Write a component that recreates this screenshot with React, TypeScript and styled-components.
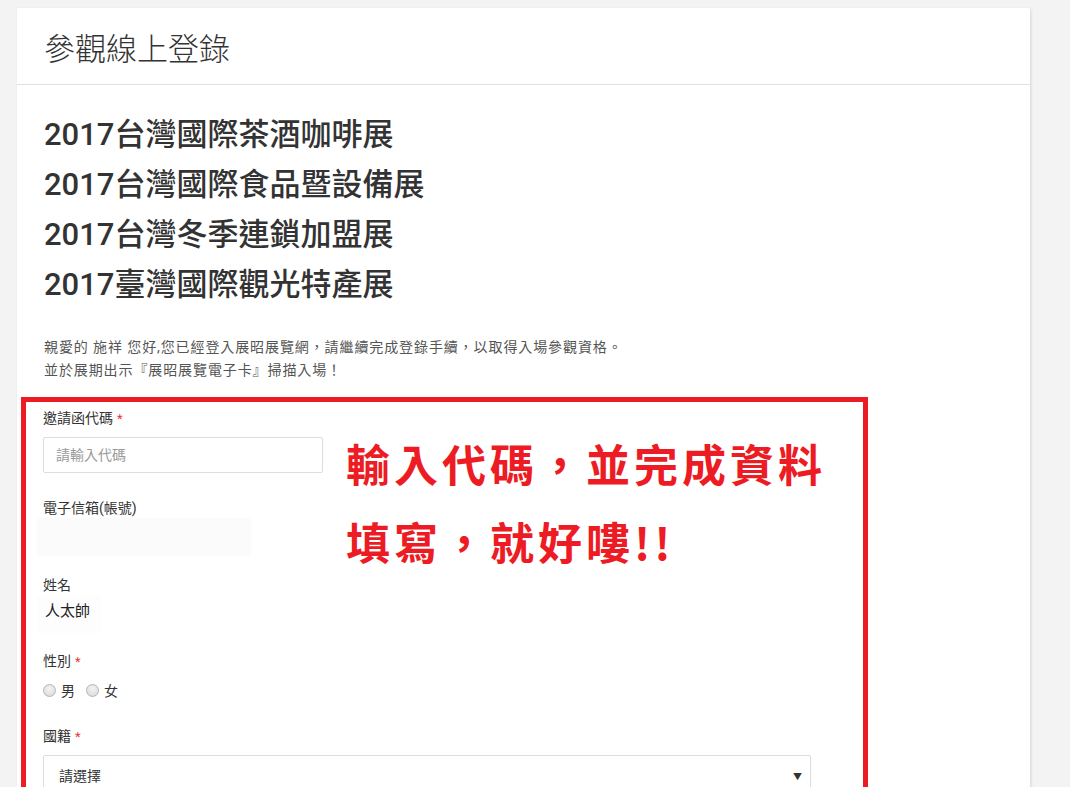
import styled, { createGlobalStyle } from 'styled-components';

const GlobalStyle = createGlobalStyle`
  html, body {
    margin: 0;
    padding: 0;
    background: #f3f3f3;
  }
  body {
    font-family: Roboto, "Noto Sans CJK TC", "Noto Sans", sans-serif;
    color: #333;
    overflow: hidden;
  }
`;

const Page = styled.div`
  padding: 8px 40px 0 17px;
  height: 787px;
  box-sizing: border-box;
`;

const Card = styled.div`
  width: 1013px;
  background: #fff;
  border-radius: 2px;
  box-shadow: 1px 1px 3px rgba(0, 0, 0, 0.12);
  min-height: 900px;
`;

const CardHeader = styled.div`
  height: 76px;
  border-bottom: 1px solid #e0e0e0;
  display: flex;
  align-items: center;
  padding: 0 27px;
`;

const PageTitle = styled.h1`
  margin: 0;
  font-size: 31px;
  font-weight: 300;
  color: #333;
`;

const CardBody = styled.div`
  padding: 25px 27px 0;
`;

const ExpoList = styled.div`
  display: flex;
  flex-direction: column;
`;

const ExpoTitle = styled.h2`
  margin: 0;
  font-size: 31px;
  line-height: 50px;
  font-weight: 500;
  color: #333;
`;

const Intro = styled.p`
  margin: 26px 0 15px;
  font-size: 14px;
  line-height: 23px;
  color: #555;
  letter-spacing: 0.9px;
`;

const Highlight = styled.div`
  position: relative;
  margin-left: -23px;
  width: 847px;
  box-sizing: border-box;
  border: 5px solid #ed1c24;
  border-bottom: none;
  padding: 6px 52px 0 17px;
`;

const Note = styled.div`
  position: absolute;
  left: 320px;
  top: 22px;
  font-family: "Noto Sans CJK TC", sans-serif;
  font-size: 44px;
  font-weight: 700;
  line-height: 78px;
  color: #ed1c24;
  letter-spacing: 4px;
`;

const Group = styled.div<{ $gap?: number }>`
  margin-bottom: ${(p) => p.$gap ?? 25}px;
`;

const Label = styled.div`
  font-size: 14px;
  line-height: 20px;
  color: #333;
  margin-bottom: 8px;
`;

const Req = styled.span`
  color: #e53935;
  margin-left: 4px;
  font-size: 13px;
`;

const TextInput = styled.input`
  display: block;
  width: 280px;
  height: 36px;
  box-sizing: border-box;
  border: 1px solid #ddd;
  border-radius: 2px;
  padding: 0 12px;
  font-family: inherit;
  font-size: 14px;
  color: #333;
  outline: none;
  &::placeholder {
    color: #9a9a9a;
  }
`;

const Static = styled.div<{ $width: number; $faint?: boolean }>`
  width: ${(p) => p.$width}px;
  height: 38px;
  margin: -8px 0 0 -6px;
  padding-left: 8px;
  box-sizing: border-box;
  line-height: 32px;
  font-size: 15px;
  color: #222;
  background: ${(p) => (p.$faint ? '#fbfbfb' : '#fdfdfd')};
  border-radius: 3px;
`;

const RadioRow = styled.div`
  display: flex;
  align-items: center;
  gap: 11px;
  height: 30px;
  margin-top: -5px;
`;

const RadioItem = styled.label`
  display: flex;
  align-items: center;
  gap: 5px;
  font-size: 14px;
  color: #333;
`;

const RadioDot = styled.span`
  width: 13px;
  height: 13px;
  border-radius: 50%;
  border: 1px solid #b5b5b5;
  background: radial-gradient(circle at 50% 35%, #f4f4f4, #d6d6d6);
  box-sizing: border-box;
`;

const Select = styled.div`
  width: 768px;
  height: 40px;
  box-sizing: border-box;
  border: 1px solid #ddd;
  border-radius: 2px;
  padding: 0 8px 0 15px;
  display: flex;
  align-items: center;
  justify-content: space-between;
  font-size: 14px;
  color: #333;
`;

const Caret = styled.span`
  font-size: 9px;
  color: #333;
  margin-top: 2px;
`;

const expos = [
  '2017台灣國際茶酒咖啡展',
  '2017台灣國際食品暨設備展',
  '2017台灣冬季連鎖加盟展',
  '2017臺灣國際觀光特產展',
];

export default function App() {
  return (
    <>
      <GlobalStyle />
      <Page>
        <Card>
          <CardHeader>
            <PageTitle>參觀線上登錄</PageTitle>
          </CardHeader>
          <CardBody>
            <ExpoList>
              {expos.map((e) => (
                <ExpoTitle key={e}>{e}</ExpoTitle>
              ))}
            </ExpoList>
            <Intro>
              親愛的 施祥 您好,您已經登入展昭展覽網，請繼續完成登錄手續，以取得入場參觀資格。
              <br />
              並於展期出示『展昭展覽電子卡』掃描入場！
            </Intro>
            <Highlight>
              <Note>
                輸入代碼，並完成資料
                <br />
                填寫，就好嘍!!
              </Note>
              <Group>
                <Label>
                  邀請函代碼<Req>*</Req>
                </Label>
                <TextInput placeholder="請輸入代碼" />
              </Group>
              <Group $gap={19}>
                <Label>電子信箱(帳號)</Label>
                <Static $width={214} $faint />
              </Group>
              <Group $gap={18}>
                <Label>姓名</Label>
                <Static $width={64}>人太帥</Static>
              </Group>
              <Group $gap={21}>
                <Label>
                  性別<Req>*</Req>
                </Label>
                <RadioRow>
                  <RadioItem>
                    <RadioDot />男
                  </RadioItem>
                  <RadioItem>
                    <RadioDot />女
                  </RadioItem>
                </RadioRow>
              </Group>
              <Group>
                <Label>
                  國籍<Req>*</Req>
                </Label>
                <Select>
                  <span>請選擇</span>
                  <Caret>▼</Caret>
                </Select>
              </Group>
            </Highlight>
          </CardBody>
        </Card>
      </Page>
    </>
  );
}
